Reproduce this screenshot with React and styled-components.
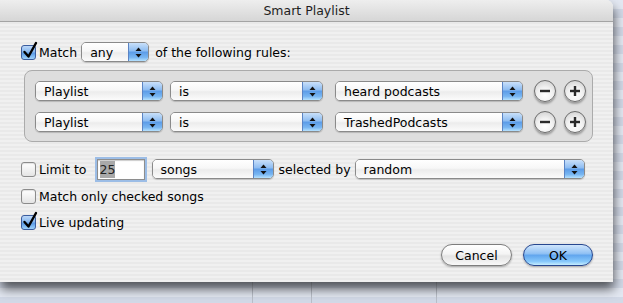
import React from "react";
import styled, { createGlobalStyle, css } from "styled-components";

const GlobalStyle = createGlobalStyle`
  html, body {
    margin: 0;
    padding: 0;
  }
  body {
    font-family: "DejaVu Sans", "Liberation Sans", sans-serif;
    font-size: 12.5px;
    color: #000;
  }
`;

const Desktop = styled.div`
  width: 623px;
  height: 303px;
  overflow: hidden;
  background-color: #e3e8f2;
  background-image:
    linear-gradient(to right, transparent 252px, #b9bec8 252px, #b9bec8 253px, transparent 253px),
    linear-gradient(to right, transparent 311px, #b9bec8 311px, #b9bec8 312px, transparent 312px),
    linear-gradient(to right, transparent 436px, #b9bec8 436px, #b9bec8 437px, transparent 437px),
    repeating-linear-gradient(to bottom, #e3e8f2 0px, #e3e8f2 9px, #d2d9e7 9px, #d2d9e7 18px);
`;

const Dialog = styled.div`
  width: 613px;
  height: 282px;
  display: flex;
  flex-direction: column;
  border-radius: 0 7px 0 0;
  overflow: hidden;
  box-shadow: 1px 7px 11px rgba(0, 0, 0, 0.62);
  background: repeating-linear-gradient(
    to bottom,
    #f0f0f0 0px,
    #f0f0f0 2px,
    #e9e9e9 2px,
    #e9e9e9 4px
  );
`;

const TitleBar = styled.div`
  height: 21px;
  flex-shrink: 0;
  display: flex;
  align-items: center;
  justify-content: center;
  border-bottom: 1px solid #a4a4a4;
  background: linear-gradient(to bottom, #eeeeee 0%, #e2e2e2 50%, #d6d6d6 100%);
  color: #1e1e1e;
  font-size: 12.5px;
`;

const Content = styled.div`
  display: flex;
  flex-direction: column;
  padding: 0 20px 0 21px;
`;

const Row = styled.div`
  display: flex;
  align-items: center;
  height: ${(p) => p.height || 20}px;
  margin-top: ${(p) => p.top || 0}px;
`;

const Label = styled.span`
  white-space: nowrap;
  margin-left: ${(p) => p.gap || 0}px;
  color: #000;
`;

const CheckBox = styled.span`
  position: relative;
  width: 15px;
  height: 15px;
  box-sizing: border-box;
  flex-shrink: 0;
  border-radius: 3px;
  ${(p) =>
    p.checked
      ? css`
          border: 1px solid #3a5c9e;
          background: linear-gradient(
            to bottom,
            #bcd8f8 0%,
            #86b6ee 45%,
            #5a9ae6 55%,
            #9ed2fb 100%
          );
        `
      : css`
          border: 1px solid #8b8b8b;
          background: linear-gradient(to bottom, #ffffff 0%, #f2f2f2 50%, #e4e4e4 100%);
          box-shadow: inset 0 1px 1px rgba(0, 0, 0, 0.12);
        `}
`;

const CheckMark = styled.svg`
  position: absolute;
  left: 1px;
  top: -4px;
  overflow: visible;
`;

const Check = ({ checked }) => (
  <CheckBox checked={checked}>
    {checked && (
      <CheckMark width="15" height="17" viewBox="0 0 15 17">
        <path
          d="M1.5 10 L5.5 14.5 L13 1"
          fill="none"
          stroke="#000"
          strokeWidth="2.4"
          strokeLinecap="round"
          strokeLinejoin="round"
        />
      </CheckMark>
    )}
  </CheckBox>
);

const PopupBox = styled.div`
  display: flex;
  align-items: stretch;
  width: ${(p) => p.width}px;
  height: 20px;
  margin-left: ${(p) => p.gap || 0}px;
  box-sizing: border-box;
  flex-shrink: 0;
  border: 1px solid #8a8a8a;
  border-radius: 5px;
  overflow: hidden;
  box-shadow: 0 1px 1px rgba(0, 0, 0, 0.18);
`;

const PopupText = styled.div`
  flex: 1;
  display: flex;
  align-items: center;
  padding-left: 8px;
  white-space: nowrap;
  background: linear-gradient(
    to bottom,
    #ffffff 0%,
    #f7f7f7 45%,
    #ececec 55%,
    #fbfbfb 100%
  );
`;

const PopupArrows = styled.div`
  width: 19px;
  display: flex;
  align-items: center;
  justify-content: center;
  border-left: 1px solid #5b84c4;
  background: linear-gradient(
    to bottom,
    #c9e0fa 0%,
    #90bef2 42%,
    #5d9de8 52%,
    #78b6f2 80%,
    #b6e2ff 100%
  );
`;

const Popup = ({ width, gap, children }) => (
  <PopupBox width={width} gap={gap}>
    <PopupText>{children}</PopupText>
    <PopupArrows>
      <svg width="7" height="11" viewBox="0 0 7 11">
        <polygon points="3.5,0.5 6.5,4 0.5,4" fill="#111" />
        <polygon points="0.5,7 6.5,7 3.5,10.5" fill="#111" />
      </svg>
    </PopupArrows>
  </PopupBox>
);

const RulesBox = styled.div`
  display: flex;
  flex-direction: column;
  gap: 11px;
  width: 569px;
  box-sizing: border-box;
  margin: 8px 0 0 3px;
  padding: 10px 6px 9px 10px;
  border: 1px solid #ababab;
  border-radius: 8px;
  background: #dedede;
`;

const RoundButton = styled.div`
  width: 22px;
  height: 22px;
  box-sizing: border-box;
  flex-shrink: 0;
  margin-left: ${(p) => p.gap || 0}px;
  display: flex;
  align-items: center;
  justify-content: center;
  border-radius: 50%;
  border: 1px solid #6c6c6c;
  background: radial-gradient(
    circle at 50% 70%,
    #ffffff 0%,
    #f1f1f1 45%,
    #c9c9c9 100%
  );
  box-shadow: 0 2px 2px rgba(0, 0, 0, 0.3);
`;

const Sign = ({ plus }) => (
  <svg width="12" height="12" viewBox="0 0 12 12">
    <rect x="1" y="4.8" width="10" height="2.4" fill="#2a2a2a" />
    {plus && <rect x="4.8" y="1" width="2.4" height="10" fill="#2a2a2a" />}
  </svg>
);

const TextField = styled.div`
  width: 48px;
  height: 21px;
  box-sizing: border-box;
  margin-left: ${(p) => p.gap || 0}px;
  padding-left: 2px;
  display: flex;
  align-items: center;
  background: #fff;
  border: 1px solid #8e8e8e;
  box-shadow: 0 0 0 2px #9cbde6, inset 0 1px 1px rgba(0, 0, 0, 0.2);
`;

const Selection = styled.span`
  background: #a9a9a9;
  color: #222;
  padding: 1px 0;
`;

const ButtonRow = styled.div`
  display: flex;
  justify-content: flex-end;
  gap: 11px;
  margin-top: 14px;
`;

const PushButton = styled.div`
  width: ${(p) => p.width}px;
  height: 22px;
  box-sizing: border-box;
  display: flex;
  align-items: center;
  justify-content: center;
  border-radius: 11px;
  box-shadow: 0 1px 2px rgba(0, 0, 0, 0.3);
  ${(p) =>
    p.primary
      ? css`
          border: 1px solid #27478f;
          background: linear-gradient(
            to bottom,
            #cfe5fc 0%,
            #92c2f4 42%,
            #62a6ee 52%,
            #86c8fb 82%,
            #c6eeff 100%
          );
        `
      : css`
          border: 1px solid #7d7d7d;
          background: linear-gradient(
            to bottom,
            #ffffff 0%,
            #f4f4f4 45%,
            #e4e4e4 55%,
            #f8f8f8 100%
          );
        `}
`;

const rules = [
  { field: "Playlist", op: "is", value: "heard podcasts" },
  { field: "Playlist", op: "is", value: "TrashedPodcasts" },
];

export default function App() {
  return (
    <>
      <GlobalStyle />
      <Desktop>
        <Dialog>
          <TitleBar>Smart Playlist</TitleBar>
          <Content>
            <Row top={20}>
              <Check checked />
              <Label gap={3}>Match</Label>
              <Popup width={68} gap={4}>
                any
              </Popup>
              <Label gap={6}>of the following rules:</Label>
            </Row>

            <RulesBox>
              {rules.map((rule, index) => (
                <Row key={index}>
                  <Popup width={128}>{rule.field}</Popup>
                  <Popup width={153} gap={7}>
                    {rule.op}
                  </Popup>
                  <Popup width={188} gap={12}>
                    {rule.value}
                  </Popup>
                  <RoundButton gap={11}>
                    <Sign />
                  </RoundButton>
                  <RoundButton gap={8}>
                    <Sign plus />
                  </RoundButton>
                </Row>
              ))}
            </RulesBox>

            <Row top={15} height={24}>
              <Check />
              <Label gap={3}>Limit to</Label>
              <TextField gap={10}>
                <Selection>25</Selection>
              </TextField>
              <Popup width={122} gap={7}>
                songs
              </Popup>
              <Label gap={5}>selected by</Label>
              <Popup width={230} gap={4}>
                random
              </Popup>
            </Row>

            <Row top={8} height={15}>
              <Check />
              <Label gap={3}>Match only checked songs</Label>
            </Row>

            <Row top={11} height={15}>
              <Check checked />
              <Label gap={3}>Live updating</Label>
            </Row>

            <ButtonRow>
              <PushButton width={71}>Cancel</PushButton>
              <PushButton width={70} primary>
                OK
              </PushButton>
            </ButtonRow>
          </Content>
        </Dialog>
      </Desktop>
    </>
  );
}
